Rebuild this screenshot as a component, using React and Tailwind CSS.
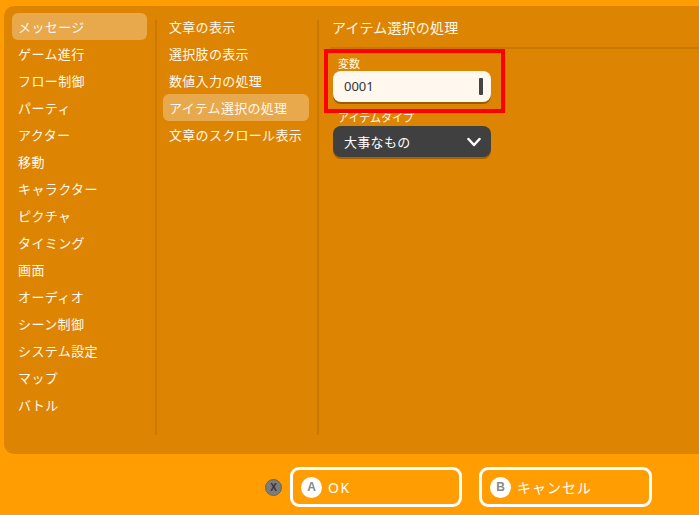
import React from "react";

const left = ["メッセージ","ゲーム進行","フロー制御","パーティ","アクター","移動","キャラクター","ピクチャ","タイミング","画面","オーディオ","シーン制御","システム設定","マップ","バトル"];
const mid = ["文章の表示","選択肢の表示","数値入力の処理","アイテム選択の処理","文章のスクロール表示"];

export default function App() {
  return (
    <div className="w-[699px] h-[515px] bg-[#ff9d02] flex flex-col overflow-hidden text-[#fff8ee]" style={{fontFamily: '"Noto Sans CJK JP", "Noto Sans", sans-serif'}}>
      <div className="ml-[4px] mt-[6px] h-[448px] bg-[#dd8502] rounded-l-[10px] flex">
        <div className="w-[151px] pl-[8px] pr-[8px] pt-[7px] flex flex-col">
          {left.map((t, i) => (
            <div key={t} className={"h-[27px] flex items-center pl-[6px] rounded-[6px] text-[13px] tracking-[0.4px] " + (i === 0 ? "bg-[#e8a84c]" : "")}>{t}</div>
          ))}
        </div>
        <div className="w-[2px] bg-[#c97800] mt-[14px] mb-[19px]"></div>
        <div className="w-[160px] pl-[6px] pr-[8px] pt-[7px] flex flex-col">
          {mid.map((t, i) => (
            <div key={t} className={"h-[27px] flex items-center pl-[6px] rounded-[6px] text-[13px] tracking-[0.3px] " + (i === 3 ? "bg-[#e8a84c]" : "")}>{t}</div>
          ))}
        </div>
        <div className="w-[2px] bg-[#c97800] mt-[14px] mb-[19px]"></div>
        <div className="flex-1 relative flex flex-col">
          <div className="ml-[11px] pl-[2px] pt-[12px] pb-[11px] border-b-2 border-[#c97800] text-[14px] leading-[18px] tracking-[0.2px]">アイテム選択の処理</div>
          <div className="pl-[14px] flex flex-col">
            <div className="mt-[7px] pl-[5px] text-[11px] leading-[14px]">変数</div>
            <div className="mt-[1px] w-[158px] h-[31px] rounded-[8px] bg-[#fff8ee] shadow-[0_2px_0_rgba(0,0,0,0.3)] flex items-center justify-between pl-[11px] pr-[8px] text-[#333] text-[13px]" style={{fontFamily: '"Noto Sans", sans-serif'}}>
              <span>0001</span>
              <span className="w-[4px] h-[17px] bg-[#444] rounded-[1px]"></span>
            </div>
            <div className="mt-[8px] pl-[5px] text-[11px] leading-[14px]">アイテムタイプ</div>
            <div className="mt-[2px] w-[158px] h-[31px] rounded-[8px] bg-[#404040] shadow-[0_2px_0_rgba(0,0,0,0.25)] flex items-center justify-between pl-[11px] pr-[10px] text-[13px] tracking-[0.3px] text-white">
              <span>大事なもの</span>
              <svg width="14" height="10" viewBox="0 0 14 10"><polyline points="1.5,2 7,8 12.5,2" fill="none" stroke="#fff" strokeWidth="2.5" strokeLinecap="round" strokeLinejoin="round"/></svg>
            </div>
          </div>
          <div className="absolute left-[5px] top-[43px] w-[181px] h-[64px] border-[4px] border-[#ff0000]"></div>
        </div>
      </div>
      <div className="flex-1 flex items-center justify-end pr-[47px] pt-[5px]">
        <div className="w-[17px] h-[17px] rounded-full bg-[#7c7c7c] border border-[#666] flex items-center justify-center text-[10px] font-bold text-[#333] mr-[8px]" style={{fontFamily: '"Liberation Sans", sans-serif'}}>X</div>
        <div className="w-[172px] h-[40px] rounded-[9px] border-[3px] border-white flex items-center pl-[8px]">
          <span className="w-[21px] h-[21px] rounded-full bg-white text-[#888] flex items-center justify-center text-[12px] font-bold" style={{fontFamily: '"Liberation Sans", sans-serif'}}>A</span>
          <span className="ml-[6px] text-[14px] tracking-[1.5px] text-white" style={{fontFamily: '"Noto Sans", sans-serif'}}>OK</span>
        </div>
        <div className="ml-[17px] w-[173px] h-[40px] rounded-[9px] border-[3px] border-white flex items-center pl-[8px]">
          <span className="w-[21px] h-[21px] rounded-full bg-white text-[#888] flex items-center justify-center text-[12px] font-bold" style={{fontFamily: '"Liberation Sans", sans-serif'}}>B</span>
          <span className="ml-[6px] text-[14px] tracking-[1px] text-white">キャンセル</span>
        </div>
      </div>
    </div>
  );
}
